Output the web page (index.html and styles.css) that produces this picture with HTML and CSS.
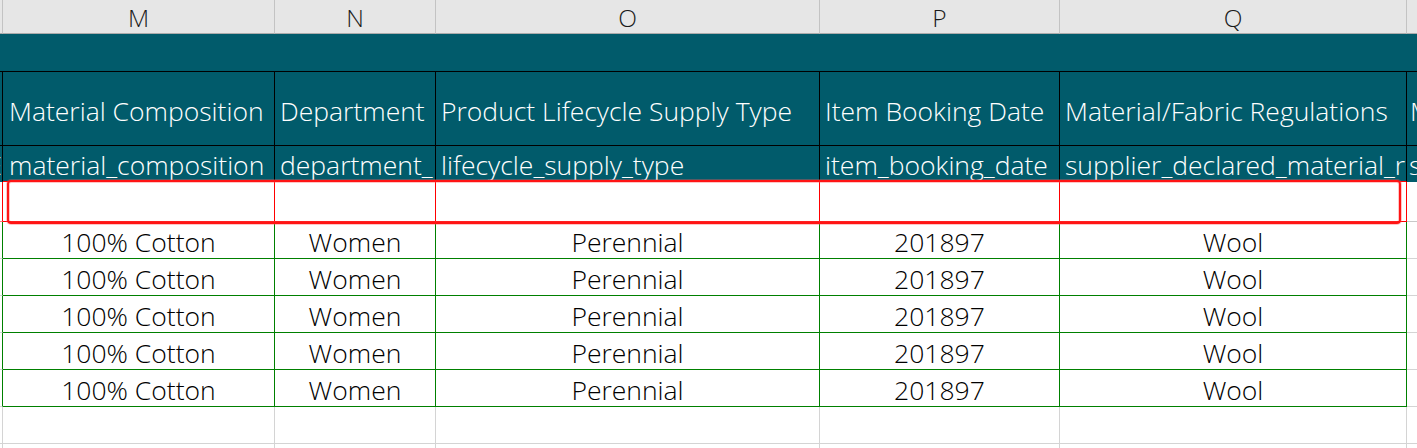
FILE: index.html
```html
<!DOCTYPE html>
<html lang="en">
<head>
<meta charset="utf-8">
<title>Sheet</title>
<link rel="stylesheet" href="styles.css">
</head>
<body>
<div class="sheet">
  <div class="row colhead">
    <div class="cell c0"></div>
    <div class="cell">M</div>
    <div class="cell">N</div>
    <div class="cell">O</div>
    <div class="cell">P</div>
    <div class="cell">Q</div>
    <div class="cell last"></div>
  </div>
  <div class="band"></div>
  <div class="row head">
    <div class="cell c0"></div>
    <div class="cell first">Material Composition</div>
    <div class="cell">Department</div>
    <div class="cell">Product Lifecycle Supply Type</div>
    <div class="cell">Item Booking Date</div>
    <div class="cell">Material/Fabric Regulations</div>
    <div class="cell last">M</div>
  </div>
  <div class="row field">
    <div class="cell c0"><span>E</span></div>
    <div class="cell first">material_composition</div>
    <div class="cell">department_</div>
    <div class="cell">lifecycle_supply_type</div>
    <div class="cell">item_booking_date</div>
    <div class="cell">supplier_declared_material_r</div>
    <div class="cell last">s</div>
  </div>
  <div class="row mark">
    <div class="cell c0"></div>
    <div class="cell"></div>
    <div class="cell"></div>
    <div class="cell"></div>
    <div class="cell"></div>
    <div class="cell"></div>
    <div class="cell last"></div>
  </div>
  <div class="row data">
    <div class="cell c0"></div>
    <div class="cell">100% Cotton</div>
    <div class="cell">Women</div>
    <div class="cell">Perennial</div>
    <div class="cell">201897</div>
    <div class="cell">Wool</div>
    <div class="cell last"></div>
  </div>
  <div class="row data">
    <div class="cell c0"></div>
    <div class="cell">100% Cotton</div>
    <div class="cell">Women</div>
    <div class="cell">Perennial</div>
    <div class="cell">201897</div>
    <div class="cell">Wool</div>
    <div class="cell last"></div>
  </div>
  <div class="row data">
    <div class="cell c0"></div>
    <div class="cell">100% Cotton</div>
    <div class="cell">Women</div>
    <div class="cell">Perennial</div>
    <div class="cell">201897</div>
    <div class="cell">Wool</div>
    <div class="cell last"></div>
  </div>
  <div class="row data">
    <div class="cell c0"></div>
    <div class="cell">100% Cotton</div>
    <div class="cell">Women</div>
    <div class="cell">Perennial</div>
    <div class="cell">201897</div>
    <div class="cell">Wool</div>
    <div class="cell last"></div>
  </div>
  <div class="row data">
    <div class="cell c0"></div>
    <div class="cell">100% Cotton</div>
    <div class="cell">Women</div>
    <div class="cell">Perennial</div>
    <div class="cell">201897</div>
    <div class="cell">Wool</div>
    <div class="cell last"></div>
  </div>
  <div class="row empty">
    <div class="cell c0"></div>
    <div class="cell"></div>
    <div class="cell"></div>
    <div class="cell"></div>
    <div class="cell"></div>
    <div class="cell"></div>
    <div class="cell last"></div>
  </div>
  <div class="row empty short">
    <div class="cell c0"></div>
    <div class="cell"></div>
    <div class="cell"></div>
    <div class="cell"></div>
    <div class="cell"></div>
    <div class="cell"></div>
    <div class="cell last"></div>
  </div>
  <div class="marker"></div>
</div>
</body>
</html>
```

FILE: styles.css
```css
* { box-sizing: border-box; }

html, body {
  margin: 0;
  padding: 0;
  background: #ffffff;
  overflow: hidden;
}

body {
  font-family: "Open Sans", "Noto Sans", sans-serif;
  font-weight: 300;
  width: 1417px;
  height: 448px;
}

.sheet {
  position: relative;
  width: 1417px;
  height: 448px;
  overflow: hidden;
}

.row {
  display: grid;
  grid-template-columns: 3px 272px 161px 384px 240px 347px 1fr;
}

.cell {
  display: flex;
  align-items: center;
  overflow: hidden;
  white-space: nowrap;
  border-right: 1px solid transparent;
  border-bottom: 1px solid transparent;
}

/* Column letters */
.colhead {
  height: 34px;
  background: #e6e6e6;
}
.colhead .cell {
  justify-content: center;
  font-size: 24.5px;
  color: #1a1a1a;
  border-right-color: #c3c3c3;
  border-bottom-color: #ababab;
  padding-top: 1px;
}
.colhead .last { border-right: none; }

/* Teal merged band */
.band {
  height: 38px;
  background: #015b6b;
  border-bottom: 1px solid #000000;
}

/* Header titles */
.head {
  height: 74px;
  background: #015b6b;
}
.head .cell {
  color: #ffffff;
  font-size: 26.5px;
  padding-left: 5px;
  padding-top: 4px;
  border-right-color: #000000;
  border-bottom-color: #000000;
}
.head .c0 { padding: 0; }
.head .first { padding-left: 6px; }
.head .last {
  border-right: none;
  padding-left: 3px;
}

/* Field names */
.field {
  height: 36px;
  background: #015b6b;
}
.field .cell {
  color: #ffffff;
  font-size: 26.5px;
  padding-left: 5px;
  padding-top: 3px;
  border-right-color: #000000;
  border-bottom-color: #ff0000;
}
.field .first { padding-left: 6px; }
.field .c0 {
  padding: 3px 0 0 0;
  justify-content: flex-end;
  border-bottom-color: #015b6b;
}
.field .last {
  border-right: none;
  border-bottom-color: #015b6b;
  padding-left: 2px;
}

/* Marked empty row */
.mark {
  height: 40px;
}
.mark .cell {
  border-right-color: #ff0000;
  border-bottom-color: #ff0000;
}
.mark .c0 { border-bottom-color: #ff8080; }
.mark .last {
  border-right: none;
  border-bottom-color: #c8c8c8;
}

/* Data rows */
.data {
  height: 37px;
}
.data .cell {
  justify-content: center;
  font-size: 26.5px;
  color: #000000;
  padding-top: 3px;
  border-right-color: #008000;
  border-bottom-color: #008000;
}
.data .c0 { border-bottom-color: #d4d4d4; }
.data .last {
  border-right: none;
  border-bottom-color: #d4d4d4;
}

/* Empty rows */
.empty {
  height: 37px;
}
.empty .cell {
  border-right-color: #d4d4d4;
  border-bottom-color: #d4d4d4;
}
.empty .last { border-right: none; }
.short { height: 8px; }
.short .cell { border-bottom: none; }

/* Red selection outline overlaid on the sheet */
.marker {
  position: absolute;
  left: 7px;
  top: 180px;
  width: 1394px;
  height: 44px;
  border: 2px solid #ff1414;
  border-radius: 4px;
  box-shadow: 0 0 0 1px rgba(255, 90, 90, 0.35), inset 0 0 0 1px rgba(255, 90, 90, 0.35);
  pointer-events: none;
}
```
